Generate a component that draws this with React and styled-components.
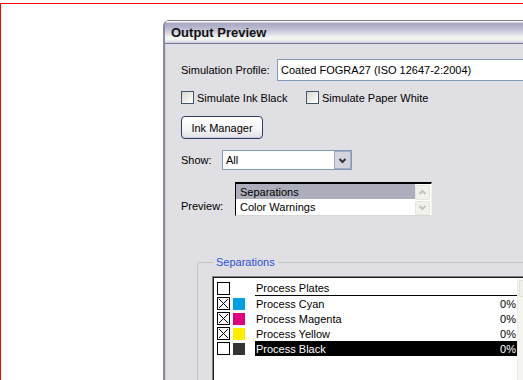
import React from 'react'
import styled, { createGlobalStyle } from 'styled-components'

const GlobalStyle = createGlobalStyle`
	html, body {
		margin: 0;
		padding: 0;
		background: #fff;
		overflow: hidden;
	}
	body {
		font-family: "Liberation Sans", Arial, sans-serif;
		font-size: 11px;
		color: #000;
	}
`

const Page = styled.div`
	width: 523px;
	height: 380px;
	overflow: hidden;
	padding-top: 3px;
	box-sizing: border-box;
	background: #fff;
`

const Frame = styled.div`
	width: 600px;
	height: 420px;
	border-top: 1px solid #ff0000;
	border-left: 1px solid #ff0000;
	padding: 16px 0 0 162px;
	box-sizing: border-box;
`

const Window = styled.div`
	width: 420px;
	height: 400px;
	background: #e0dfe3;
	border-left: 2px solid #8a8aa6;
	border-top-left-radius: 6px;
	box-shadow: inset 1px 0 0 #c8c8d6;
	overflow: hidden;
`

const TitleBar = styled.div`
	height: 22px;
	padding-left: 6px;
	display: flex;
	align-items: center;
	font-size: 13px;
	font-weight: bold;
	color: #111;
	border-top: 1px solid #7a7a98;
	border-bottom: 1px solid #76769a;
	background: linear-gradient(to bottom, #ffffff 0px, #ffffff 1px, #a6a6c2 2px, #b8b8cf 7px, #d0d0df 11px, #eceef0 15px, #f6f8f2 18px, #dcdce4 21px, #c9c9d6 22px);
`

const Body = styled.div`
	padding: 15px 0 0 16px;
	display: flex;
	flex-direction: column;
	align-items: flex-start;
`

const Row = styled.div`
	display: flex;
	align-items: ${p => p.$align || 'center'};
	margin-top: ${p => p.$top || 0}px;
`

const Label = styled.div`
	width: ${p => p.$w}px;
	flex-shrink: 0;
	padding-bottom: ${p => p.$pb || 0}px;
`

const TextInput = styled.div`
	width: 290px;
	flex-shrink: 0;
	height: 20px;
	border: 1px solid #7f9db9;
	border-right: none;
	background: #fff;
	padding-left: 3px;
	display: flex;
	align-items: center;
	white-space: nowrap;
`

const CheckItem = styled.label`
	display: flex;
	align-items: center;
	width: ${p => p.$w || 'auto'};
`

const CheckBox = styled.span`
	width: 11px;
	height: 11px;
	border: 1px solid #44546a;
	background: linear-gradient(135deg, #d8d8d2 0%, #f4f4f0 70%, #ffffff 100%);
	margin-right: 3px;
`

const Button = styled.button`
	width: 82px;
	height: 23px;
	margin-top: 12px;
	border: 1px solid #2c3e66;
	border-radius: 4px;
	background: linear-gradient(to bottom, #ffffff 0%, #f4f4f6 60%, #e0e0e6 100%);
	box-shadow: inset 0 -1px 0 #ccccd6;
	font-family: inherit;
	font-size: 11px;
	color: #000;
	padding: 0;
`

const Select = styled.div`
	width: 128px;
	height: 18px;
	border: 1px solid #7f9db9;
	background: #fff;
	display: flex;
	align-items: stretch;
`

const SelectText = styled.div`
	flex: 1;
	padding-left: 3px;
	display: flex;
	align-items: center;
`

const SelectButton = styled.div`
	width: 15px;
	border: 1px solid #a4acc4;
	background: #d4d4de;
	display: flex;
	align-items: center;
	justify-content: center;
`

const ListBox = styled.div`
	width: 195px;
	height: 31px;
	border-top: 2px solid #000;
	border-left: 1px solid #000;
	border-right: 1px solid #f4f4f4;
	border-bottom: 1px solid #d8d8d8;
	background: #fff;
	display: flex;
`

const ListItems = styled.div`
	flex: 1;
`

const ListItem = styled.div`
	height: 15px;
	padding-left: 4px;
	display: flex;
	align-items: center;
	background: ${p => (p.$selected ? '#adaebb' : '#fff')};
`

const ScrollCol = styled.div`
	width: 15px;
	display: flex;
	flex-direction: column;
	gap: 1px;
	padding: 1px 1px 0 0;
`

const ScrollBtn = styled.div`
	height: 13px;
	border: 1px solid #e6e6de;
	border-radius: 2px;
	background: #f2f2ec;
	display: flex;
	align-items: center;
	justify-content: center;
`

const Group = styled.fieldset`
	margin: 40px 0 0 16px;
	padding: 0 0 0 14px;
	width: 400px;
	height: 160px;
	border: 1px solid #c4c4c0;
	border-radius: 3px;
	box-shadow: 1px 1px 0 #f8f8f8;
`

const Legend = styled.legend`
	margin-left: 1px;
	padding: 0 3px;
	color: #2b4fd6;
	font-size: 11px;
`

const Table = styled.div`
	margin-top: 8px;
	width: 326px;
	height: 120px;
	border-top: 1px solid #808080;
	border-left: 1px solid #808080;
	box-shadow: inset 1px 1px 0 #1a1a1a;
	background: #fff;
	display: flex;
	padding: 2px 0 0 2px;
`

const Rows = styled.div`
	width: 302px;
	padding-top: 2px;
`

const PlateRow = styled.div`
	height: 15px;
	display: flex;
	align-items: center;
	padding-left: 2px;
`

const PlateCheck = styled.span`
	width: 11px;
	height: 11px;
	border: 1px solid #000;
	background: #fff;
	display: flex;
	margin-right: 3px;
`

const Swatch = styled.span`
	width: 12px;
	height: 12px;
	background: ${p => p.$color || 'transparent'};
	margin-right: 10px;
`

const PlateName = styled.div`
	flex: 1;
	height: 15px;
	padding: 0 1px;
	display: flex;
	align-items: center;
	justify-content: space-between;
	box-sizing: border-box;
	background: ${p => (p.$selected ? '#000' : 'transparent')};
	color: ${p => (p.$selected ? '#fff' : '#000')};
	border-bottom: ${p => (p.$header ? '1px solid #000' : 'none')};
`

const TableScroll = styled.div`
	width: 17px;
	background: #f4f4f0;
	border-left: 1px solid #ecece6;
	display: flex;
	flex-direction: column;
`

const TableScrollBtn = styled.div`
	height: 15px;
	margin: 1px;
	border: 1px solid #e0e0d8;
	border-radius: 2px;
	background: #efefe8;
`

const Chevron = ({ up, color = '#333', size = 9 }) => (
	<svg width={size} height={size} viewBox="0 0 9 9">
		<polyline
			points={up ? '1.5,6 4.5,3 7.5,6' : '1.5,3 4.5,6 7.5,3'}
			fill="none"
			stroke={color}
			strokeWidth="2"
		/>
	</svg>
)

const Cross = () => (
	<svg width="11" height="11" viewBox="0 0 11 11">
		<path d="M1 1 L10 10 M10 1 L1 10" stroke="#000" strokeWidth="1" />
	</svg>
)

const plates = [
	{ name: 'Process Cyan', color: '#00a0e2', checked: true },
	{ name: 'Process Magenta', color: '#dc007f', checked: true },
	{ name: 'Process Yellow', color: '#ffed00', checked: true },
	{ name: 'Process Black', color: '#333333', checked: false, selected: true },
]

export default function App() {
	return (
		<Page>
			<GlobalStyle />
			<Frame>
				<Window>
					<TitleBar>Output Preview</TitleBar>
					<Body>
						<Row>
							<Label $w={96}>Simulation Profile:</Label>
							<TextInput>Coated FOGRA27 (ISO 12647-2:2004)</TextInput>
						</Row>
						<Row $top={10}>
							<CheckItem $w="125px">
								<CheckBox />
								Simulate Ink Black
							</CheckItem>
							<CheckItem>
								<CheckBox />
								Simulate Paper White
							</CheckItem>
						</Row>
						<Button>Ink Manager</Button>
						<Row $top={11}>
							<Label $w={41}>Show:</Label>
							<Select>
								<SelectText>All</SelectText>
								<SelectButton>
									<Chevron />
								</SelectButton>
							</Select>
						</Row>
						<Row $top={12} $align="flex-end">
							<Label $w={54} $pb={4}>Preview:</Label>
							<ListBox>
								<ListItems>
									<ListItem $selected>Separations</ListItem>
									<ListItem>Color Warnings</ListItem>
								</ListItems>
								<ScrollCol>
									<ScrollBtn>
										<Chevron up color="#c4c4bc" />
									</ScrollBtn>
									<ScrollBtn>
										<Chevron color="#c4c4bc" />
									</ScrollBtn>
								</ScrollCol>
							</ListBox>
						</Row>
						<Group>
							<Legend>Separations</Legend>
							<Table>
								<Rows>
									<PlateRow>
										<PlateCheck />
										<Swatch />
										<PlateName $header>Process Plates</PlateName>
									</PlateRow>
									{plates.map(p => (
										<PlateRow key={p.name}>
											<PlateCheck>{p.checked && <Cross />}</PlateCheck>
											<Swatch $color={p.color} />
											<PlateName $selected={p.selected}>
												<span>{p.name}</span>
												<span>0%</span>
											</PlateName>
										</PlateRow>
									))}
								</Rows>
								<TableScroll>
									<TableScrollBtn />
								</TableScroll>
							</Table>
						</Group>
					</Body>
				</Window>
			</Frame>
		</Page>
	)
}
